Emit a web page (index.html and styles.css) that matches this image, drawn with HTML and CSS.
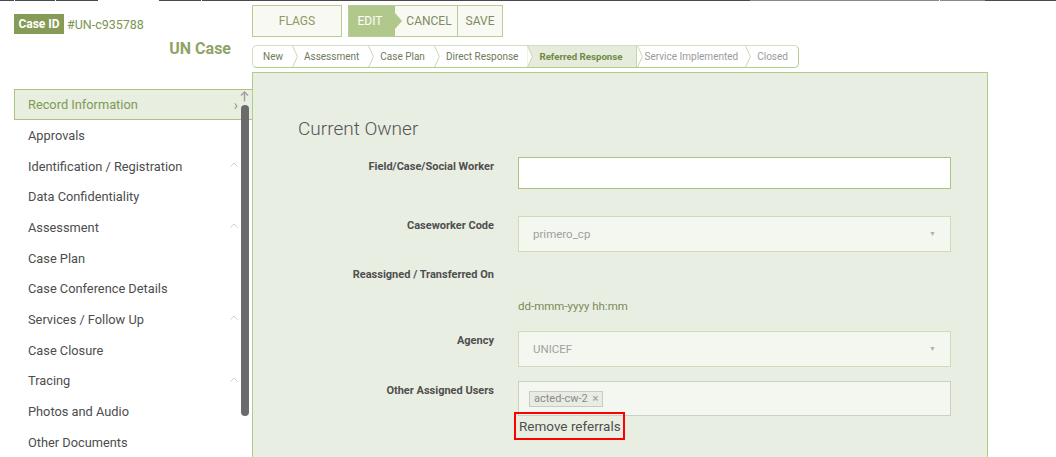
FILE: index.html
```html
<!DOCTYPE html>
<html>
<head>
<meta charset="utf-8">
<link rel="stylesheet" href="styles.css">
</head>
<body>
<div class="topline">
  <span class="seg dark" style="width:14px"></span><span class="seg gap"></span>
  <span class="seg dark" style="width:40px"></span><span class="seg gap"></span>
  <span class="seg dark" style="width:42px"></span><span class="seg white" style="width:61px"></span>
  <span class="seg dark" style="width:42px"></span><span class="seg gap"></span>
  <span class="seg dark" style="width:548px"></span>
  <span class="seg mid" style="width:189px"></span><span class="seg gap"></span>
  <span class="seg mid" style="width:45px"></span>
  <span class="seg dark" style="flex:1"></span>
</div>
<div class="layout">
  <div class="head-left">
    <div class="caseid"><span class="badge">Case ID</span><span class="cid">#UN-c935788</span></div>
    <div class="title">UN Case</div>
  </div>
  <div class="head-right">
    <div class="toolbar">
      <button class="btn flags">FLAGS</button>
      <div class="group">
        <span class="edit">EDIT</span>
        <span class="gbtn cancel">CANCEL</span>
        <span class="gbtn save">SAVE</span>
      </div>
    </div>
    <div class="crumbs">
      <span class="crumb first">New</span><svg class="chev" viewBox="0 0 6 22"><polyline points="0.5,0 5.5,11 0.5,22"/></svg>
      <span class="crumb">Assessment</span><svg class="chev" viewBox="0 0 6 22"><polyline points="0.5,0 5.5,11 0.5,22"/></svg>
      <span class="crumb">Case Plan</span><svg class="chev" viewBox="0 0 6 22"><polyline points="0.5,0 5.5,11 0.5,22"/></svg>
      <span class="crumb">Direct Response</span><svg class="chev act" viewBox="0 0 6 22"><polyline points="0.5,0 5.5,11 0.5,22"/></svg>
      <span class="crumb active">Referred Response</span><svg class="chev" viewBox="0 0 6 22"><polyline points="0.5,0 5.5,11 0.5,22"/></svg>
      <span class="crumb future after">Service Implemented</span><svg class="chev" viewBox="0 0 6 22"><polyline points="0.5,0 5.5,11 0.5,22"/></svg>
      <span class="crumb future last">Closed</span>
    </div>
  </div>

  <nav class="sidebar">
    <div class="nav-item selected">Record Information<span class="gt">›</span></div>
    <div class="nav-item">Approvals</div>
    <div class="nav-item">Identification / Registration<svg class="car" viewBox="0 0 8 5"><polyline points="0.5,4.5 4,1 7.5,4.5"/></svg></div>
    <div class="nav-item">Data Confidentiality</div>
    <div class="nav-item">Assessment<svg class="car" viewBox="0 0 8 5"><polyline points="0.5,4.5 4,1 7.5,4.5"/></svg></div>
    <div class="nav-item">Case Plan</div>
    <div class="nav-item">Case Conference Details</div>
    <div class="nav-item">Services / Follow Up<svg class="car" viewBox="0 0 8 5"><polyline points="0.5,4.5 4,1 7.5,4.5"/></svg></div>
    <div class="nav-item">Case Closure</div>
    <div class="nav-item">Tracing<svg class="car" viewBox="0 0 8 5"><polyline points="0.5,4.5 4,1 7.5,4.5"/></svg></div>
    <div class="nav-item">Photos and Audio</div>
    <div class="nav-item">Other Documents</div>
    <svg class="scroll-up" viewBox="0 0 9 11"><path d="M4.5 10.5V1M1 4.5L4.5 1L8 4.5"/></svg>
    <div class="scrollbar"></div>
  </nav>

  <main class="panel">
    <h2 class="section">Current Owner</h2>
    <div class="row r1">
      <label class="lbl">Field/Case/Social Worker</label>
      <div class="input"></div>
    </div>
    <div class="row r2">
      <label class="lbl">Caseworker Code</label>
      <div class="select"><span>primero_cp</span><span class="arrow">▼</span></div>
    </div>
    <div class="row r3">
      <label class="lbl">Reassigned / Transferred On</label>
    </div>
    <div class="row r4">
      <span class="lbl"></span>
      <span class="date">dd-mmm-yyyy hh:mm</span>
    </div>
    <div class="row r5">
      <label class="lbl">Agency</label>
      <div class="select"><span>UNICEF</span><span class="arrow">▼</span></div>
    </div>
    <div class="row r6">
      <label class="lbl">Other Assigned Users</label>
      <div class="multi"><span class="tag">acted-cw-2 <b>×</b></span></div>
    </div>
    <div class="row r7">
      <span class="lbl"></span>
      <span class="remove">Remove referrals</span>
    </div>
  </main>
</div>
</body>
</html>
```
FILE: styles.css
```css
* { box-sizing: border-box; }
html, body { margin: 0; padding: 0; background: #fff; }
body { font-family: Roboto, "Liberation Sans", sans-serif; width: 1056px; height: 457px; overflow: hidden; }

.topline { display: flex; height: 1px; }
.seg { display: block; height: 1px; }
.seg.dark { background: #4a4a4a; }
.seg.mid { background: #8a8a8a; }
.seg.gap { width: 1px; background: #fff; }
.seg.white { background: #fff; }

.layout { display: grid; grid-template-columns: 252px 736px; grid-template-rows: 71px 1fr; }

.head-left { position: relative; }
.caseid { display: flex; align-items: center; margin: 13px 0 0 14px; height: 20px; }
.badge { background: #869b55; color: #fff; font-weight: bold; font-size: 12px; height: 20px; line-height: 20px; width: 50px; text-align: center; }
.cid { color: #7c9454; font-size: 12.5px; margin-left: 3px; }
.title { text-align: right; padding-right: 21px; margin-top: 5px; font-size: 16px; font-weight: bold; color: #8ea466; }

.head-right { padding-top: 4px; }
.toolbar { display: flex; gap: 6px; height: 32px; }
.btn, .group { border: 1px solid #b8cc93; background: #f7f9f2; }
.btn { width: 90px; font-family: inherit; font-size: 12px; color: #8f9866; padding: 0; }
.group { display: flex; width: 155px; }
.edit { position: relative; width: 46px; background: #b0c88b; color: #fff; font-size: 12px; display: flex; align-items: center; justify-content: center; padding-right: 4px; }
.edit::after { content: ""; position: absolute; right: -7px; top: 50%; margin-top: -8px; border-left: 7px solid #b0c88b; border-top: 8px solid transparent; border-bottom: 8px solid transparent; }
.gbtn { display: flex; align-items: center; justify-content: center; font-size: 12px; color: #818a62; }
.cancel { width: 63px; padding-left: 6px; border-right: 1px solid #b8cc93; }
.save { flex: 1; }

.crumbs { display: flex; align-items: stretch; width: 547px; height: 23px; margin-top: 8px; border: 1px solid #d3ddc4; border-bottom-color: #b3cc8a; border-right-color: #b3cc8a; border-radius: 5px; overflow: hidden; background: #fff; }
.crumb { display: flex; align-items: center; padding: 0 9px 0 6px; font-size: 10px; color: #6e7a5a; white-space: nowrap; }
.crumb.first { padding-left: 10px; }
.crumb.active { background: #e6ecdc; color: #6f8a48; font-weight: bold; margin-left: -6px; padding-left: 12px; padding-right: 13px; font-size: 9.7px; border-right: 1px solid #c5d6a8; }
.crumb.future { color: #9a9a9a; }
.crumb.after { padding-left: 2px; padding-right: 7px; }
.crumb.last { padding-left: 6px; flex: 1; }
.chev { width: 6px; height: 21px; flex: none; position: relative; z-index: 1; }
.chev polyline { fill: none; stroke: #c8d4b3; stroke-width: 1; }
.chev.act polyline { fill: #fff; }

.sidebar { position: relative; padding-top: 17px; }
.nav-item { position: relative; margin-left: 14px; height: 30.7px; display: flex; align-items: center; padding-left: 14px; font-size: 12.8px; color: #4d4d4d; }
.nav-item.selected { height: 31px; background: #e8eee0; border: 1px solid #a9c47c; border-right: none; color: #7f9a55; padding-left: 13px; }
.gt { position: absolute; right: 14px; top: 7px; color: #8ea466; font-size: 14px; }
.car { position: absolute; right: 14px; top: 11px; width: 8px; height: 5px; }
.car polyline { fill: none; stroke: #cfcfcf; stroke-width: 1; }
.scroll-up { position: absolute; left: 240px; top: 19px; width: 9px; height: 11px; }
.scroll-up path { fill: none; stroke: #a0a0a0; stroke-width: 1.4; }
.scrollbar { position: absolute; left: 241px; top: 33px; width: 8px; height: 311px; background: #6b6b6b; border-radius: 4px; }

.panel { background: #e9eee3; border: 1px solid #b3cc8a; border-bottom: none; height: 386px; padding: 44px 0 0 45px; }
.section { margin: 0; font-weight: 300; font-size: 19px; color: #555; height: 32px; line-height: 24px; }
.row { display: flex; align-items: flex-start; }
.lbl { width: 196px; text-align: right; font-size: 11px; font-weight: bold; color: #4f4f4f; flex: none; }
.input, .select, .multi { margin-left: 24px; width: 433px; }
.input { height: 32px; background: #fff; border: 1px solid #a9c47c; }
.r1 { margin-top: 8px; }
.r1 .lbl { padding-top: 3px; }
.select { height: 36px; background: #f4f7ef; border: 1px solid #cfdcb8; display: flex; align-items: center; justify-content: space-between; padding: 0 14px 0 14px; font-size: 11.5px; color: #a0a0a0; }
.arrow { font-size: 7px; color: #b0b0b0; }
.r2 { margin-top: 27px; }
.r2 .lbl { padding-top: 3px; }
.r3 { margin-top: 16px; }
.r4 { margin-top: 18px; }
.date { margin-left: 24px; font-size: 11.5px; color: #7b8a58; }
.r5 { margin-top: 18px; }
.r5 .lbl { padding-top: 3px; }
.r6 { margin-top: 14px; }
.r6 .lbl { padding-top: 3px; }
.multi { height: 35px; border: 1px solid #cccfc6; background: #f4f7ef; padding: 5px 10px; }
.tag { display: inline-block; border: 1px solid #c9cbc2; background: #e9ece3; color: #8a8a8a; font-size: 11px; padding: 0 4px; height: 16px; line-height: 14px; }
.tag b { color: #aaa; margin-left: 2px; }
.r7 { margin-top: -4px; }
.remove { margin-left: 20px; border: 2px solid #f00; padding: 4px 2px 3px 3px; font-size: 13.5px; color: #4f4f4f; height: 28px; }
```
